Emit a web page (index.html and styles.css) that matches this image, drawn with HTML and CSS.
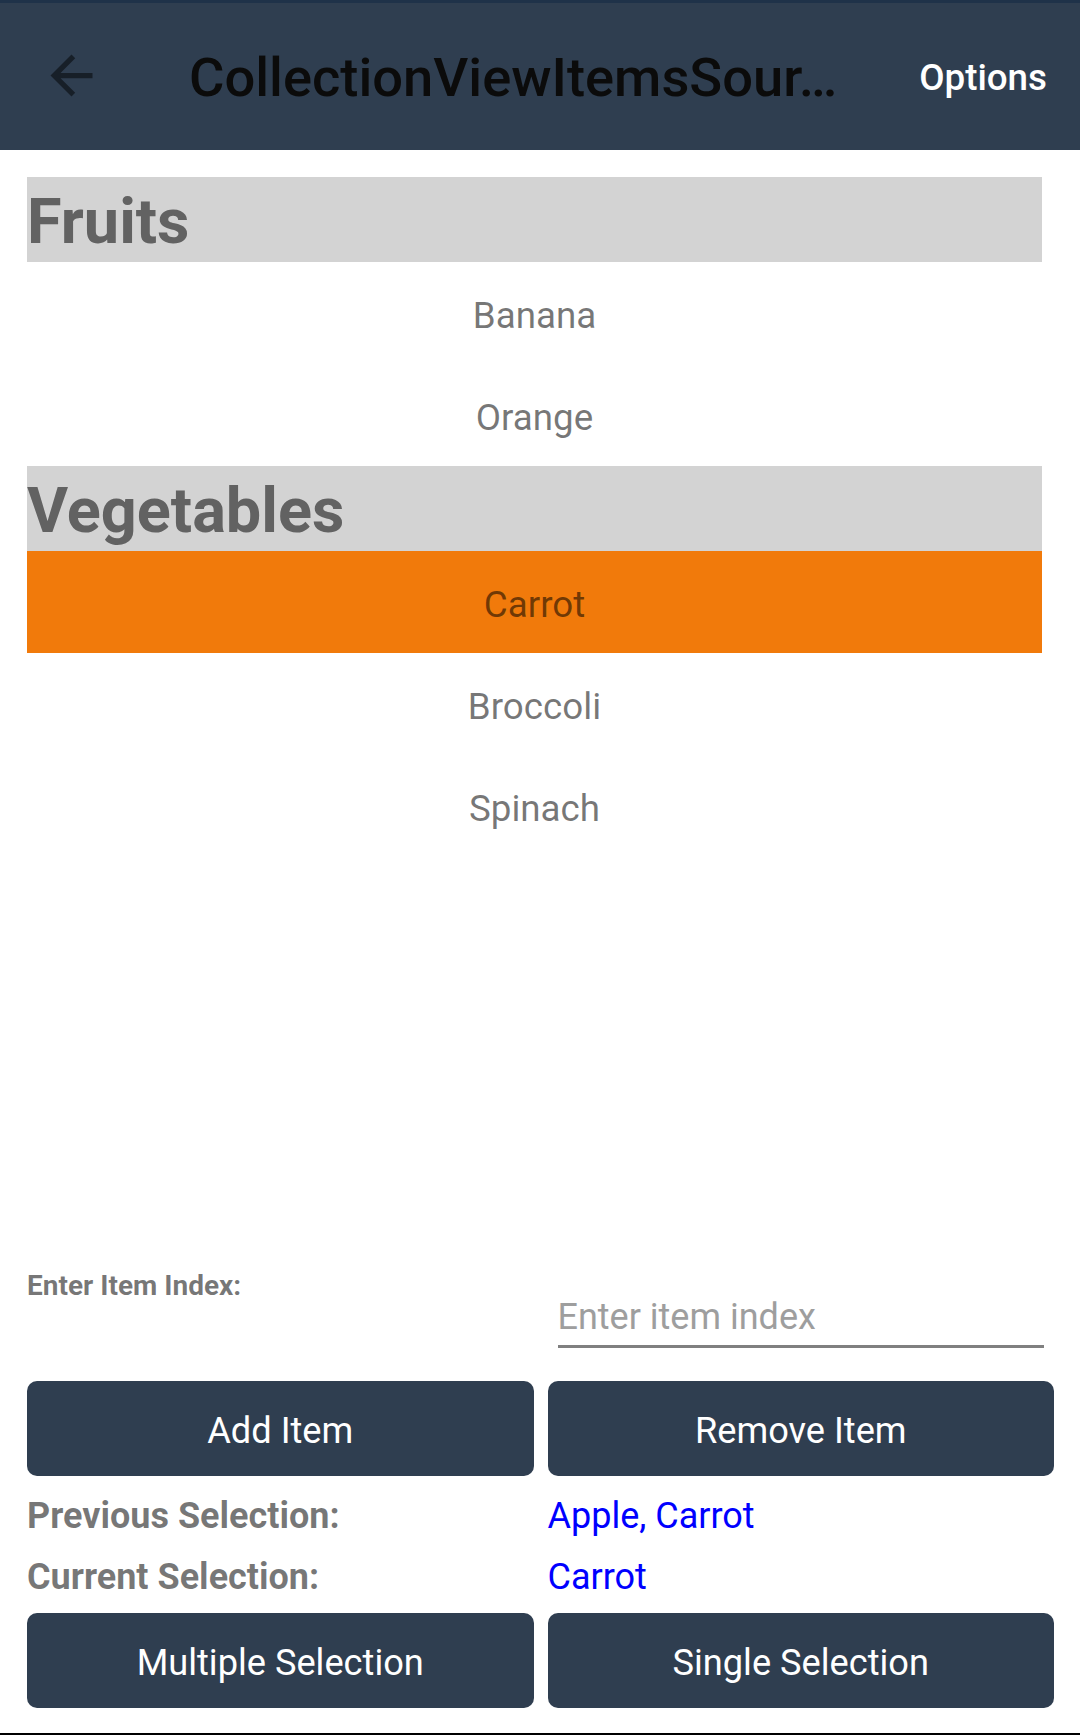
FILE: index.html
```html
<!DOCTYPE html>
<html lang="en">
<head>
<meta charset="utf-8">
<title>CollectionViewItemsSource</title>
<link rel="stylesheet" href="styles.css">
</head>
<body>
<div class="page">
  <div class="status-strip"></div>
  <header class="toolbar">
    <div class="back">
      <svg viewBox="0 0 24 24" width="63" height="63"><path d="M20 11H7.830l5.590-5.590L12 4l-8 8 8 8 1.410-1.410L7.830 13H20v-2z"/></svg>
    </div>
    <div class="title">CollectionViewItemsSour…</div>
    <div class="options">Options</div>
  </header>

  <main class="content">
    <section class="list">
      <div class="group-header">Fruits</div>
      <div class="item">Banana</div>
      <div class="item">Orange</div>
      <div class="group-header">Vegetables</div>
      <div class="item selected">Carrot</div>
      <div class="item">Broccoli</div>
      <div class="item">Spinach</div>
    </section>

    <section class="form">
      <div class="entry-row">
        <div class="small-label">Enter Item Index:</div>
        <div class="entry"><span class="placeholder">Enter item index</span></div>
      </div>
      <div class="btn-row first">
        <button class="btn">Add Item</button>
        <button class="btn">Remove Item</button>
      </div>
      <div class="info-row prev">
        <div class="info-label">Previous Selection:</div>
        <div class="info-value">Apple, Carrot</div>
      </div>
      <div class="info-row cur">
        <div class="info-label">Current Selection:</div>
        <div class="info-value">Carrot</div>
      </div>
      <div class="btn-row last">
        <button class="btn">Multiple Selection</button>
        <button class="btn">Single Selection</button>
      </div>
    </section>
  </main>
  <div class="navbar"></div>
</div>
</body>
</html>
```

FILE: styles.css
```css
* { box-sizing: border-box; }

html, body {
  margin: 0;
  padding: 0;
  background: #ffffff;
}

body {
  font-family: Roboto, "Noto Sans", "Liberation Sans", sans-serif;
}

.page {
  width: 1080px;
  height: 1735px;
  display: flex;
  flex-direction: column;
  overflow: hidden;
}

.status-strip {
  height: 3px;
  background: #1f3249;
  flex: none;
}

.toolbar {
  flex: none;
  height: 147px;
  background: #2f3e50;
  display: flex;
  align-items: center;
  padding-top: 2px;
}

.back {
  width: 63px;
  height: 63px;
  margin-left: 40px;
  margin-bottom: 4px;
  flex: none;
}

.back svg {
  display: block;
  fill: rgba(0, 0, 0, 0.5);
}

.title {
  margin-left: 86px;
  flex: 1;
  font-size: 54.3px;
  font-weight: 500;
  color: #0b0b0b;
  white-space: nowrap;
  overflow: hidden;
}

.options {
  flex: none;
  margin-right: 33px;
  margin-left: 20px;
  font-size: 36.75px;
  font-weight: 500;
  color: #ffffff;
}

.content {
  flex: 1;
  display: flex;
  flex-direction: column;
  padding: 0 26px 0 27px;
}

.list {
  flex: 1;
  margin-top: 27px;
  margin-right: 12px;
}

.group-header {
  height: 85px;
  background: #d3d3d3;
  color: #626262;
  font-size: 63px;
  font-weight: 700;
  display: flex;
  align-items: center;
  padding-top: 4px;
}

.item {
  height: 102px;
  display: flex;
  align-items: center;
  justify-content: center;
  padding-top: 4px;
  font-size: 36.75px;
  color: rgba(0, 0, 0, 0.54);
}

.item.selected {
  background: #f17a0b;
}

.form {
  flex: none;
}

.entry-row,
.btn-row,
.info-row {
  display: grid;
  grid-template-columns: 1fr 1fr;
  column-gap: 14px;
}

.entry-row {
  height: 80px;
}

.small-label {
  font-size: 28px;
  font-weight: 700;
  color: rgba(0, 0, 0, 0.54);
  align-self: start;
  padding-top: 1px;
}

.entry {
  margin: 0 10px;
  padding-top: 28px;
  padding-bottom: 6px;
  border-bottom: 3px solid #808080;
  font-size: 36px;
  line-height: 43px;
}

.placeholder {
  color: #9e9e9e;
}

.btn-row.first { margin-top: 33px; }
.btn-row.last { margin-top: 14px; }

.btn {
  height: 95px;
  border: none;
  border-radius: 10px;
  background: #2f3e50;
  color: #ffffff;
  font-family: Roboto, "Noto Sans", "Liberation Sans", sans-serif;
  font-size: 36.2px;
  font-weight: 400;
  padding: 4px 0 0 0;
  margin: 0;
}

.info-row {
  font-size: 36px;
  line-height: 43px;
}

.info-row.prev { margin-top: 19px; }
.info-row.cur { margin-top: 18px; }

.info-label {
  font-weight: 700;
  color: rgba(0, 0, 0, 0.54);
}

.info-value {
  color: #0000ff;
}

.navbar {
  flex: none;
  margin-top: 25px;
  height: 2px;
  background: #000000;
}
```
